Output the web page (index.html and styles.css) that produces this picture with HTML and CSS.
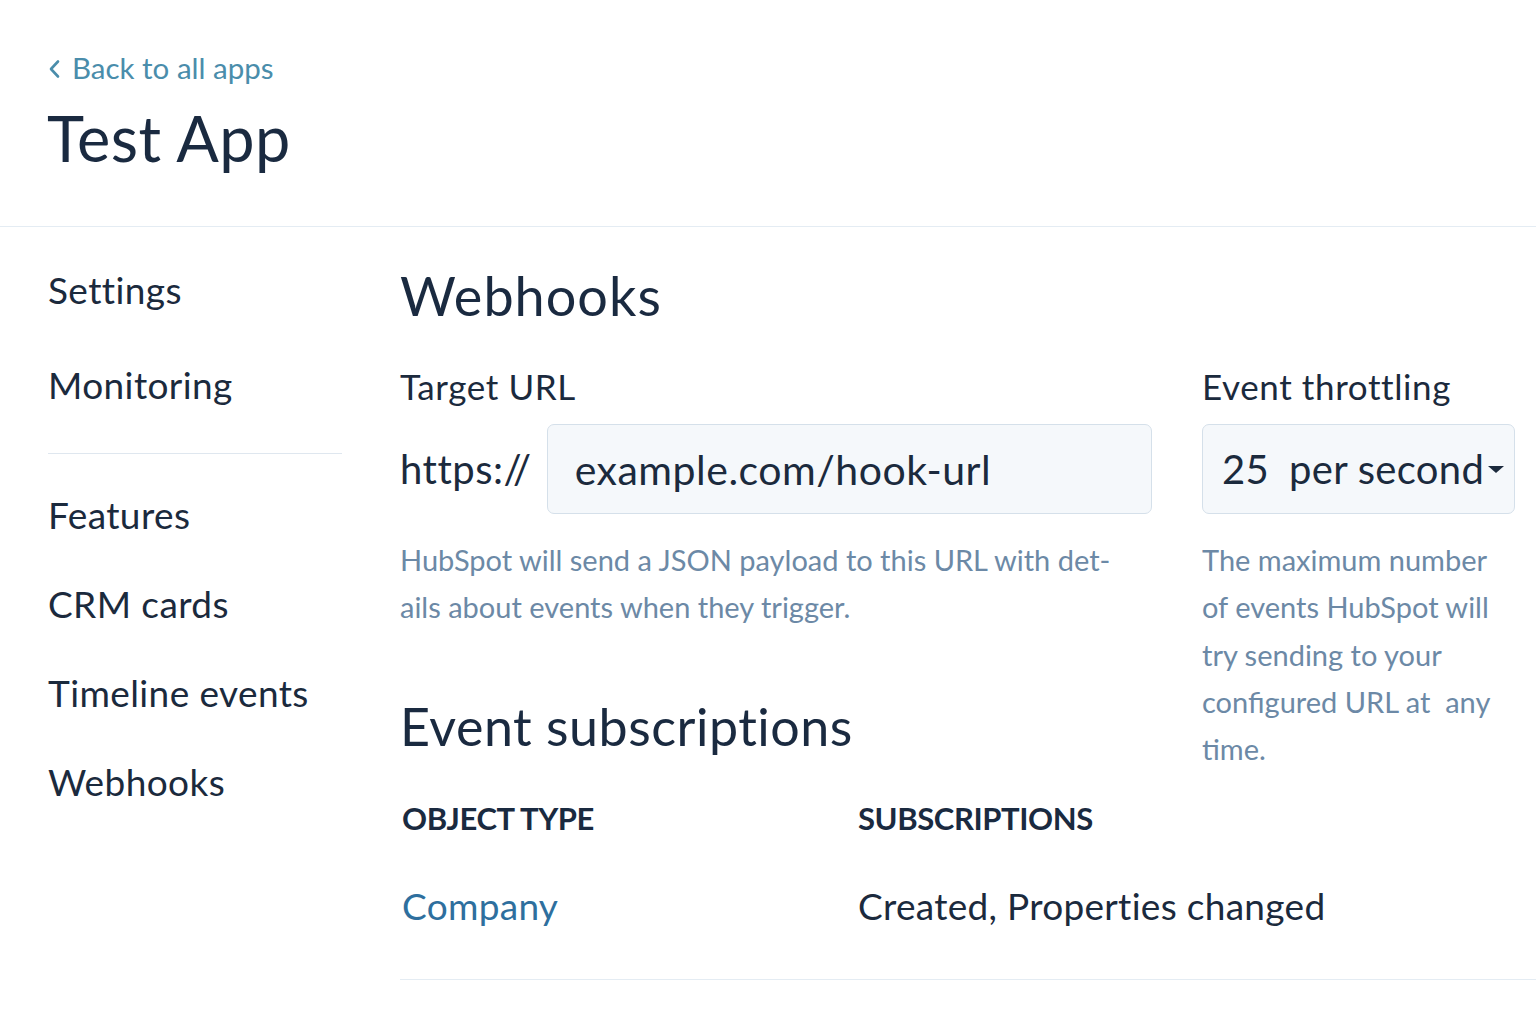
FILE: index.html
```html
<!DOCTYPE html>
<html lang="en">
<head>
<meta charset="UTF-8">
<meta name="viewport" content="width=device-width, initial-scale=1.0">
<title>Test App - Webhooks</title>
<link rel="stylesheet" href="styles.css">
</head>
<body>
<div class="page-header">
  <a class="back-link" href="#">
    <svg class="back-icon" width="13" height="20" viewBox="0 0 13 20"><path d="M10 2.5 L3 10 L10 17.5" fill="none" stroke="currentColor" stroke-width="2.6" stroke-linecap="round" stroke-linejoin="round"/></svg>
    Back to all apps
  </a>
  <h1 class="app-title">Test App</h1>
</div>

<div class="layout">
  <div class="sidebar">
    <div class="nav-group nav-top">
      <a class="nav-item" href="#">Settings</a>
      <a class="nav-item" href="#">Monitoring</a>
    </div>
    <hr class="nav-divider">
    <div class="nav-group">
      <a class="nav-item" href="#">Features</a>
      <a class="nav-item" href="#">CRM cards</a>
      <a class="nav-item" href="#">Timeline events</a>
      <a class="nav-item" href="#">Webhooks</a>
    </div>
  </div>

  <div class="main">
    <h2 class="page-title">Webhooks</h2>

    <div class="form-grid">
      <div class="url-col">
        <div class="field-label">Target URL</div>
        <div class="url-row">
          <span class="url-prefix">https://</span>
          <div class="text-input">example.com/hook-url</div>
        </div>
        <p class="help-text">HubSpot will send a JSON payload to this URL with det-<br>ails about events when they trigger.</p>
        <h3 class="section-title">Event subscriptions</h3>
      </div>

      <div class="throttle-col">
        <div class="field-label">Event throttling</div>
        <div class="select-input">
          <span class="select-num">25</span>
          <span class="select-unit">per second</span>
          <span class="caret"></span>
        </div>
        <p class="help-text">The maximum number of events HubSpot will try sending to your configured URL at&nbsp; any time.</p>
      </div>
    </div>

    <div class="sub-table">
      <div class="sub-row sub-head">
        <div class="col-type">OBJECT TYPE</div>
        <div class="col-subs">SUBSCRIPTIONS</div>
      </div>
      <div class="sub-row sub-body">
        <div class="col-type"><a class="object-link" href="#">Company</a></div>
        <div class="col-subs">Created, Properties changed</div>
      </div>
    </div>
  </div>
</div>
</body>
</html>
```

FILE: styles.css
```css
body {
  font-family: Lato, "Open Sans", sans-serif;
  margin: 0;
  padding: 0;
  background-color: #fff;
  color: #1b2a3d;
}
a {
  text-decoration: none;
}
.page-header {
  padding: 48px 47px 50px;
  border-bottom: 1px solid #e4ecf3;
}
.back-link {
  display: flex;
  align-items: center;
  gap: 11px;
  font-size: 29.5px;
  line-height: 40px;
  color: #4a8dab;
  padding-left: 1px;
}
.back-icon {
  margin-top: 2px;
}
.app-title {
  margin: 12px 0 0;
  font-size: 63px;
  line-height: 76px;
  font-weight: 400;
  letter-spacing: 0.5px;
  color: #1a2a40;
}
.layout {
  display: flex;
}
.sidebar {
  width: 294px;
  flex-shrink: 0;
  padding: 15px 58px 0 48px;
  display: flex;
  flex-direction: column;
}
.nav-item {
  display: block;
  font-size: 37px;
  line-height: 45px;
  padding: 22px 0;
  letter-spacing: 0.4px;
  color: #1b2a3d;
}
.nav-top .nav-item {
  padding: 25px 0;
}
.nav-divider {
  border: none;
  border-top: 1px solid #dfe7ef;
  margin: 21px 0 16px;
}
.main {
  flex: 1;
}
.page-title {
  margin: 37px 0 0;
  font-size: 54px;
  line-height: 64px;
  font-weight: 400;
  letter-spacing: 1px;
  color: #1a2a40;
}
.form-grid {
  display: grid;
  grid-template-columns: 752px 313px;
  column-gap: 50px;
  margin-top: 36px;
}
.field-label {
  font-size: 35px;
  line-height: 44px;
  letter-spacing: 0.6px;
  color: #1b2a3d;
}
.url-row {
  display: flex;
  align-items: center;
  gap: 15px;
  margin-top: 16px;
}
.url-prefix {
  font-size: 40px;
  letter-spacing: 0.5px;
  color: #1b2a3d;
}
.text-input {
  flex: 1;
  height: 90px;
  box-sizing: border-box;
  display: flex;
  align-items: center;
  padding-left: 27px;
  font-size: 41px;
  letter-spacing: 0.5px;
  background-color: #f5f8fb;
  border: 1px solid #d5e0ea;
  border-radius: 7px;
  color: #1b2a3d;
}
.select-input {
  height: 90px;
  box-sizing: border-box;
  margin-top: 16px;
  display: flex;
  align-items: center;
  padding: 0 8px 0 19px;
  font-size: 40px;
  letter-spacing: 0.3px;
  background-color: #f5f8fb;
  border: 1px solid #d5e0ea;
  border-radius: 7px;
  color: #1b2a3d;
}
.select-num {
  margin-right: 20px;
}
.caret {
  width: 0;
  height: 0;
  margin-left: 4px;
  border-left: 8px solid transparent;
  border-right: 8px solid transparent;
  border-top: 7px solid #1b2a3d;
}
.help-text {
  margin: 22px 0 0;
  font-size: 29px;
  line-height: 47.3px;
  color: #6c89a6;
}
.section-title {
  margin: 65px 0 0;
  font-size: 52px;
  line-height: 60px;
  font-weight: 400;
  letter-spacing: 0.5px;
  color: #1a2a40;
}
.sub-table {
  margin-top: 26px;
}
.sub-row {
  display: flex;
  padding-left: 2px;
}
.col-type {
  width: 456px;
}
.sub-head {
  font-size: 31px;
  line-height: 40px;
  font-weight: 700;
  letter-spacing: -0.4px;
  color: #1a2a40;
}
.sub-body {
  font-size: 37px;
  line-height: 44px;
  letter-spacing: 0.3px;
  padding-top: 46px;
  padding-bottom: 51px;
  border-bottom: 1px solid #e4ecf3;
  color: #1b2a3d;
}
.object-link {
  color: #2e6f9e;
}
```
